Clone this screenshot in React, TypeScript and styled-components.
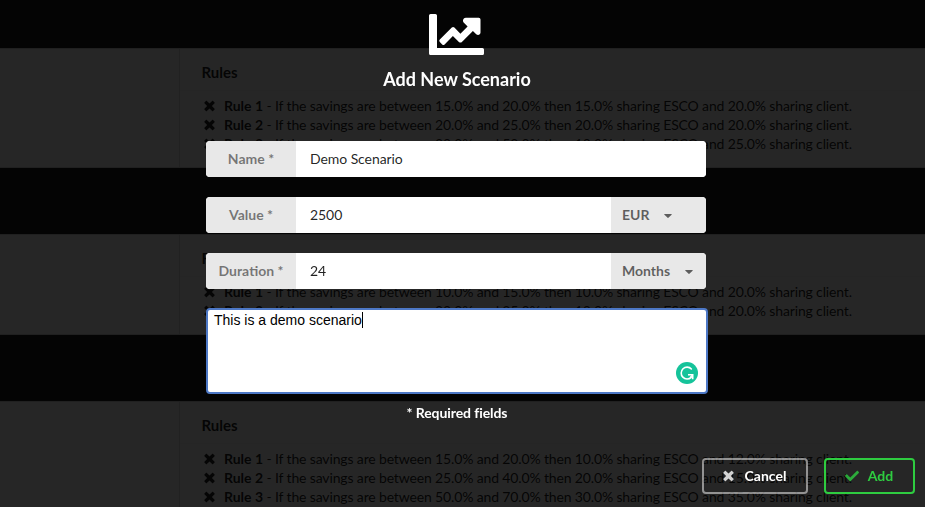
import React from 'react';
import styled, { createGlobalStyle } from 'styled-components';

const GlobalStyle = createGlobalStyle`
  * { box-sizing: border-box; }
  html, body { margin: 0; height: 100%; overflow: hidden; }
  body {
    background: #1b1c1d;
    font-family: Lato, "Liberation Sans", sans-serif;
    font-size: 14px;
    color: rgba(0, 0, 0, 0.87);
  }
`;

const Page = styled.main`
  display: flex;
  flex-direction: column;
  gap: 66px;
  height: 507px;
  padding-top: 48px;
  overflow: hidden;
`;

const Segment = styled.section`
  display: flex;
  flex: none;
  background: #fff;
  border-top: 1px solid #d4d4d5;
  border-bottom: 1px solid #d4d4d5;
`;

const Summary = styled.div`
  width: 180px;
  border-right: 1px solid #dedede;
`;

const Details = styled.div`
  flex: 1;
`;

const RulesTitle = styled.h3`
  margin: 0;
  height: 42px;
  padding: 13px 0 0 21.5px;
  border-bottom: 1px solid #f3f3f3;
  font-size: 15px;
  font-weight: 700;
  line-height: 20px;
`;

const RuleList = styled.ul`
  list-style: none;
  margin: 0;
  padding: 5px 0 14px 24px;
`;

const Rule = styled.li`
  display: flex;
  align-items: center;
  height: 19px;
  white-space: pre;
  line-height: 19px;

  svg { margin-right: 9px; }
  span { letter-spacing: -0.145px; }
`;

const Dimmer = styled.div`
  position: fixed;
  inset: 0;
  background: rgba(0, 0, 0, 0.85);
  display: flex;
  flex-direction: column;
  justify-content: space-between;
  padding: 14px 10px 13px 0;
`;

const Dialog = styled.div`
  display: flex;
  flex-direction: column;
  align-items: center;
  width: 914px;
  color: #fff;
`;

const Title = styled.h2`
  margin: 11px 0 0;
  font-size: 18px;
  line-height: 26px;
  font-weight: 700;
`;

const Form = styled.form`
  display: flex;
  flex-direction: column;
  gap: 20px;
  width: 500px;
  margin: 49px 0 0 -2px;
`;

const Field = styled.div`
  display: flex;
  height: 36px;
  border-radius: 4px;
  overflow: hidden;
  background: #fff;
`;

const Label = styled.label`
  flex: none;
  width: 90px;
  background: #e8e8e8;
  color: rgba(0, 0, 0, 0.5);
  font-weight: 700;
  line-height: 36px;
  text-align: center;
`;

const Input = styled.input`
  flex: 1;
  min-width: 0;
  border: 0;
  outline: 0;
  padding: 0 14px 2px;
  color: rgba(0, 0, 0, 0.87);
  font: 14px Lato, sans-serif;
  letter-spacing: -0.07px;
`;

const Dropdown = styled.div`
  display: flex;
  align-items: center;
  gap: 15px;
  width: 95px;
  padding: 0 0 1px 11px;
  background: #e8e8e8;
  color: rgba(0, 0, 0, 0.6);
  font-weight: 700;

  svg { margin-top: 3px; }
`;

const Description = styled.div`
  display: flex;
  justify-content: space-between;
  width: 502px;
  height: 86px;
  margin: -1px 0 0 0;
  padding: 2px 8px 8px 6px;
  border: 2px solid #4d78c6;
  border-radius: 4px;
  background: #fff;
  color: #000;
  font: 14px/17px "Liberation Sans", sans-serif;

  svg { align-self: flex-end; }
`;

const Caret = styled.span`
  display: inline-block;
  width: 1px;
  height: 16px;
  vertical-align: top;
  background: #000;
`;

const Required = styled.p`
  margin: -11px 0 0 2px;
  text-align: center;
  line-height: 20px;
  font-weight: 700;
  letter-spacing: -0.08px;
`;

const Actions = styled.footer`
  display: flex;
  justify-content: flex-end;
  gap: 16px;
`;

const Button = styled.button<{ $positive?: boolean }>`
  display: flex;
  align-items: center;
  justify-content: center;
  gap: ${(p) => (p.$positive ? 9 : 11)}px;
  width: ${(p) => (p.$positive ? 91 : 106)}px;
  height: 36px;
  padding: 0 1px 1px 0;
  border: 2px solid ${(p) => (p.$positive ? '#2ecc40' : 'rgba(255, 255, 255, 0.5)')};
  border-radius: 4px;
  background: transparent;
  color: ${(p) => (p.$positive ? '#2ecc40' : '#fff')};
  font: 700 14px Lato, sans-serif;

  svg { opacity: 0.8; }
`;

const ChartIcon = () => (
  <svg width="56" height="41" viewBox="0 0 56 41" fill="#fff">
    <path d="M1.6 0h4.8Q8 0 8 1.6V34h45.4q1.6 0 1.6 1.6v3.8q0 1.6-1.6 1.6H1.6Q0 41 0 39.4V1.6Q0 0 1.6 0z" />
    <path d="M36.8 3.7h12.9q1.8 0 1.8 1.8v13c0 2.300-2.700 3.300-4.300 1.700l-3.300-3.300-11 11q-1.500 1.400-3 0l-6-6-8.300 8.500q-1.200 1.200-2.400 0l-2.400-2.400q-1.200-1.200 0-2.400l12-12q1.300-1.200 2.600 0l6 6.100 7.200-7.200-3.500-3.500c-2-2-1-5.300 1.700-5.300z" />
  </svg>
);

const Cross = () => (
  <svg width="11" height="14" viewBox="0 0 384 512" fill="currentColor">
    <path d="M323.1 441l53.9-53.9c9.4-9.4 9.4-24.5 0-33.9L279.8 256l97.2-97.2c9.4-9.4 9.4-24.5 0-33.9L323.1 71c-9.4-9.4-24.5-9.4-33.9 0L192 168.2 94.8 71c-9.4-9.4-24.5-9.4-33.9 0L7 124.9c-9.4 9.4-9.4 24.5 0 33.9l97.2 97.2L7 353.2c-9.4 9.4-9.4 24.5 0 33.9L60.9 441c9.4 9.4 24.5 9.4 33.9 0l97.2-97.2 97.2 97.2c9.3 9.3 24.5 9.3 33.9 0z" />
  </svg>
);

const Check = () => (
  <svg width="14" height="14" viewBox="0 0 512 512" fill="currentColor">
    <path d="M173.898 439.404l-166.4-166.4c-9.997-9.997-9.997-26.206 0-36.204l36.203-36.204c9.997-9.998 26.207-9.998 36.204 0L192 312.69 432.095 72.596c9.997-9.997 26.207-9.997 36.204 0l36.203 36.204c9.997 9.997 9.997 26.206 0 36.204l-294.4 294.401c-9.998 9.997-26.207 9.997-36.204-.001z" />
  </svg>
);

const Arrow = () => (
  <svg width="8" height="4" viewBox="0 0 8 4" fill="currentColor">
    <path d="M.6 0h6.8q.6.2.2.7L4.4 3.8q-.4.3-.8 0L.4.7Q0 .2.6 0z" />
  </svg>
);

const GrammarBadge = () => (
  <svg width="22" height="22" viewBox="0 0 22 22" fill="none">
    <circle cx="11" cy="11" r="11" fill="#15c39a" />
    <path d="M15.4 7A5.9 5.9 0 1 0 15.2 15.300" stroke="#fff" strokeWidth="1.6" strokeLinecap="round" />
    <path d="M12 12.7h4.7v4.5" stroke="#fff" strokeWidth="1.6" />
    <path d="M16.7 12.7l-2.600 2.900" stroke="#fff" strokeWidth="1.4" />
  </svg>
);

type Share = [string, string, string, string];

const scenarios: Share[][] = [
  [
    ['15.0', '20.0', '15.0', '20.0'],
    ['20.0', '25.0', '20.0', '20.0'],
    ['30.0', '50.0', '10.0', '25.0'],
  ],
  [
    ['10.0', '15.0', '10.0', '20.0'],
    ['20.0', '25.0', '10.0', '20.0'],
  ],
  [
    ['15.0', '20.0', '10.0', '12.0'],
    ['25.0', '40.0', '20.0', '15.0'],
    ['50.0', '70.0', '30.0', '35.0'],
  ],
];

export default function App() {
  return (
    <>
      <GlobalStyle />
      <Page>
        {scenarios.map((rules, s) => (
          <Segment key={s}>
            <Summary />
            <Details>
              <RulesTitle>Rules</RulesTitle>
              <RuleList>
                {rules.map(([from, to, esco, client], i) => (
                  <Rule key={i}>
                    <Cross />
                    <b>Rule {i + 1}</b>
                    <span>{` - If the savings are between ${from}% and ${to}% then ${esco}% sharing ESCO and ${client}% sharing client.`}</span>
                  </Rule>
                ))}
              </RuleList>
            </Details>
          </Segment>
        ))}
      </Page>
      <Dimmer>
        <Dialog>
          <ChartIcon />
          <Title>Add New Scenario</Title>
          <Form>
            <Field>
              <Label>Name *</Label>
              <Input defaultValue="Demo Scenario" />
            </Field>
            <Field>
              <Label>Value *</Label>
              <Input defaultValue="2500" />
              <Dropdown>EUR<Arrow /></Dropdown>
            </Field>
            <Field>
              <Label>Duration *</Label>
              <Input defaultValue="24" />
              <Dropdown>Months<Arrow /></Dropdown>
            </Field>
            <Description>
              <span>This is a demo scenario<Caret /></span>
              <GrammarBadge />
            </Description>
            <Required>* Required fields</Required>
          </Form>
        </Dialog>
        <Actions>
          <Button type="button"><Cross />Cancel</Button>
          <Button type="button" $positive><Check />Add</Button>
        </Actions>
      </Dimmer>
    </>
  );
}
